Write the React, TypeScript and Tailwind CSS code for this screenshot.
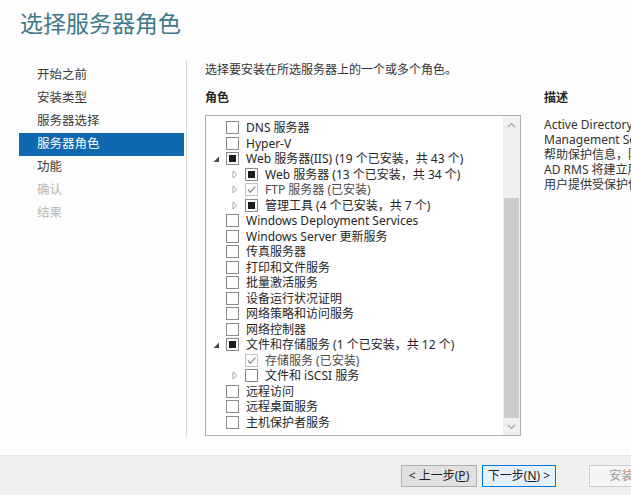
import React from 'react';

type CheckState = 'empty' | 'partial' | 'checked';
type Expander = 'none' | 'open' | 'closed';

interface RoleRow {
  label: string;
  level: 0 | 1;
  state: CheckState;
  exp: Expander;
}

const ROLES: RoleRow[] = [
  { label: 'DNS 服务器', level: 0, state: 'empty', exp: 'none' },
  { label: 'Hyper-V', level: 0, state: 'empty', exp: 'none' },
  { label: 'Web 服务器(IIS) (19 个已安装，共 43 个)', level: 0, state: 'partial', exp: 'open' },
  { label: 'Web 服务器 (13 个已安装，共 34 个)', level: 1, state: 'partial', exp: 'closed' },
  { label: 'FTP 服务器 (已安装)', level: 1, state: 'checked', exp: 'closed' },
  { label: '管理工具 (4 个已安装，共 7 个)', level: 1, state: 'partial', exp: 'closed' },
  { label: 'Windows Deployment Services', level: 0, state: 'empty', exp: 'none' },
  { label: 'Windows Server 更新服务', level: 0, state: 'empty', exp: 'none' },
  { label: '传真服务器', level: 0, state: 'empty', exp: 'none' },
  { label: '打印和文件服务', level: 0, state: 'empty', exp: 'none' },
  { label: '批量激活服务', level: 0, state: 'empty', exp: 'none' },
  { label: '设备运行状况证明', level: 0, state: 'empty', exp: 'none' },
  { label: '网络策略和访问服务', level: 0, state: 'empty', exp: 'none' },
  { label: '网络控制器', level: 0, state: 'empty', exp: 'none' },
  { label: '文件和存储服务 (1 个已安装，共 12 个)', level: 0, state: 'partial', exp: 'open' },
  { label: '存储服务 (已安装)', level: 1, state: 'checked', exp: 'none' },
  { label: '文件和 iSCSI 服务', level: 1, state: 'empty', exp: 'closed' },
  { label: '远程访问', level: 0, state: 'empty', exp: 'none' },
  { label: '远程桌面服务', level: 0, state: 'empty', exp: 'none' },
  { label: '主机保护者服务', level: 0, state: 'empty', exp: 'none' },
];

const NAV = [
  { label: '开始之前', kind: 'normal' },
  { label: '安装类型', kind: 'normal' },
  { label: '服务器选择', kind: 'normal' },
  { label: '服务器角色', kind: 'active' },
  { label: '功能', kind: 'normal' },
  { label: '确认', kind: 'disabled' },
  { label: '结果', kind: 'disabled' },
];

const DESCRIPTION = [
  'Active Directory Rights',
  'Management Services (AD RMS)',
  '帮助保护信息，防止未经授权使用。',
  'AD RMS 将建立用户标识，并为授权',
  '用户提供受保护信息的许可证。',
];

const FONT = "font-['Segoe_UI','Noto_Sans','Noto_Sans_CJK_SC',sans-serif]";

const ExpanderIcon: React.FC<{ exp: Expander }> = ({ exp }) => {
  if (exp === 'open') {
    return (
      <svg width="7" height="7" viewBox="0 0 7 7" className="mt-[2px]">
        <polygon points="6,0.5 6,6 0.5,6" fill="#4a4a4a" />
      </svg>
    );
  }
  if (exp === 'closed') {
    return (
      <svg width="6" height="9" viewBox="0 0 6 9">
        <polygon points="1,1 5,4.5 1,8" fill="none" stroke="#a6a6a6" strokeWidth="1" />
      </svg>
    );
  }
  return null;
};

const CheckBox: React.FC<{ state: CheckState }> = ({ state }) => {
  if (state === 'checked') {
    return (
      <div className="w-[13px] h-[13px] border border-[#c4c4c4] bg-white flex items-center justify-center shrink-0">
        <svg width="11" height="11" viewBox="0 0 11 11">
          <path d="M1.8 5.6 L4.3 8.2 L9.4 2.6" fill="none" stroke="#8e8e8e" strokeWidth="1.4" />
        </svg>
      </div>
    );
  }
  return (
    <div className="w-[13px] h-[13px] border border-[#8a8a8a] bg-white flex items-center justify-center shrink-0">
      {state === 'partial' && <div className="w-[7px] h-[7px] bg-[#1c1c1c]" />}
    </div>
  );
};

const RoleItem: React.FC<{ row: RoleRow }> = ({ row }) => (
  <div className={`flex items-center h-[15.5px] whitespace-nowrap ${row.level === 1 ? 'pl-[19px]' : ''}`}>
    <div className="w-[20px] flex items-center justify-center shrink-0">
      <ExpanderIcon exp={row.exp} />
    </div>
    <CheckBox state={row.state} />
    <span className={`ml-[7px] text-[12px] leading-[15px] ${row.state === 'checked' ? 'text-[#4a4a4a]' : 'text-[#262626]'}`}>
      {row.label}
    </span>
  </div>
);

const ScrollBar: React.FC = () => (
  <div className="w-[17px] bg-[#f0f0f0] flex flex-col shrink-0">
    <div className="h-[17px] flex items-center justify-center">
      <svg width="9" height="6" viewBox="0 0 9 6">
        <path d="M1 5 L4.5 1.5 L8 5" fill="none" stroke="#a3a3a3" strokeWidth="1.2" />
      </svg>
    </div>
    <div className="h-[65px]" />
    <div className="h-[220px] mx-[1px] bg-[#cdcdcd]" />
    <div className="flex-1 flex items-center justify-center">
      <svg width="9" height="6" viewBox="0 0 9 6">
        <path d="M1 1 L4.5 4.5 L8 1" fill="none" stroke="#a3a3a3" strokeWidth="1.2" />
      </svg>
    </div>
  </div>
);

const App: React.FC = () => {
  return (
    <div className={`w-[631px] h-[495px] overflow-hidden bg-[#fdfdfd] flex flex-col ${FONT}`}>
      {/* Title */}
      <div className="h-[60px] shrink-0 pl-[20px] pt-[7px]">
        <h1 className="text-[23px] leading-[32px] text-[#3f7888] font-normal whitespace-nowrap">选择服务器角色</h1>
      </div>

      {/* Main */}
      <div className="h-[395px] shrink-0 flex">
        {/* Wizard steps */}
        <nav className="w-[187px] h-[377px] shrink-0 border-r border-[#dadada] pt-[4px] pl-[19px] pr-[2px]">
          {NAV.map((item) => (
            <div
              key={item.label}
              className={`h-[23px] flex items-center pl-[18px] text-[12.5px] ${
                item.kind === 'active'
                  ? 'bg-[#0f68b0] text-white'
                  : item.kind === 'disabled'
                  ? 'text-[#b6b6b6]'
                  : 'text-[#3a3a3a]'
              }`}
            >
              {item.label}
            </div>
          ))}
        </nav>

        {/* Content */}
        <div className="flex-1 pl-[18px] flex flex-col min-w-0">
          <p className="mt-[2px] text-[12px] leading-[16px] text-[#333] whitespace-nowrap">
            选择要安装在所选服务器上的一个或多个角色。
          </p>

          <div className="flex mt-[12px]">
            <div className="w-[316px] shrink-0">
              <h2 className="text-[12px] leading-[16px] font-bold text-[#262626]">角色</h2>
              <div className="mt-[9px] w-[316px] h-[321px] border border-[#adadad] bg-white flex">
                <div className="flex-1 pt-[4px] overflow-hidden">
                  {ROLES.map((row, i) => (
                    <RoleItem key={i} row={row} />
                  ))}
                </div>
                <ScrollBar />
              </div>
            </div>

            {/* Description, clipped by the window edge as in the wizard */}
            <div className="ml-[23px] flex-1 min-w-0 overflow-hidden">
              <h2 className="text-[12px] leading-[16px] font-bold text-[#262626]">描述</h2>
              <div className="mt-[11px] text-[12px] leading-[15px] text-[#333] whitespace-nowrap">
                {DESCRIPTION.map((line) => (
                  <div key={line}>{line}</div>
                ))}
              </div>
            </div>
          </div>
        </div>
      </div>

      {/* Footer buttons */}
      <div className="flex-1 bg-[#f0f0f0] border-t border-[#e4e4e4] flex items-start pt-[9px] pl-[401px] overflow-hidden">
        <button className="shrink-0 w-[76px] h-[22px] border border-[#adadad] bg-[#e1e1e1] text-[12px] text-[#222] whitespace-nowrap">
          &lt; 上一步(<span className="underline">P</span>)
        </button>
        <button className="shrink-0 ml-[5px] w-[74px] h-[22px] border border-[#0078d7] bg-[#e5f1fb] text-[12px] text-[#222] whitespace-nowrap">
          下一步(<span className="underline">N</span>) &gt;
        </button>
        <button className="shrink-0 ml-[33px] w-[76px] h-[22px] border border-[#cccccc] bg-[#f5f5f5] text-[12px] text-[#9a9a9a] whitespace-nowrap">
          安装(<span className="underline">I</span>)
        </button>
      </div>
    </div>
  );
};

export default App;
